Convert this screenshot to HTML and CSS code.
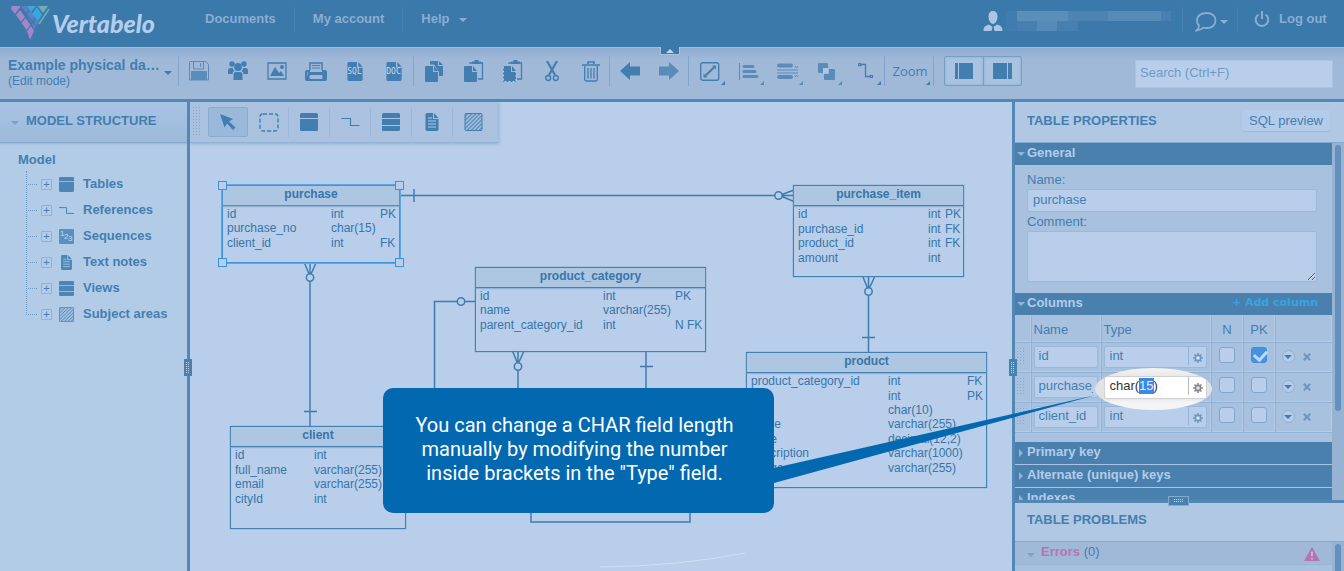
FILE: index.html
```html
<!DOCTYPE html>
<html lang="en">
<head>
<meta charset="utf-8">
<title>Vertabelo</title>
<link rel="stylesheet" href="styles.css">
</head>
<body>
<svg class="defs" aria-hidden="true">
  <defs>
    <pattern id="hatch" width="4" height="4" patternUnits="userSpaceOnUse"><path d="M-1 1L1-1M0 4L4 0M3 5L5 3" stroke="currentColor" stroke-width="1.2"/></pattern>
    <symbol id="i-table" viewBox="0 0 18 18"><path d="M1.500 0h15Q18 0 18 1.500V5H0V1.500Q0 0 1.500 0zM0 6h18v10.500q0 1.500-1.500 1.500h-15Q0 18 0 16.500z" fill="currentColor"/></symbol>
    <symbol id="i-view" viewBox="0 0 18 18"><path d="M1.500 0h15Q18 0 18 1.500V5H0V1.500Q0 0 1.500 0zM0 6h18v6H0zM0 13h18v3.500q0 1.500-1.500 1.500h-15Q0 18 0 16.500z" fill="currentColor"/></symbol>
    <symbol id="i-ref" viewBox="0 0 18 18"><path d="M0 5.500h9v7h9" fill="none" stroke="currentColor" stroke-width="1.200"/></symbol>
    <symbol id="i-note" viewBox="0 0 18 18"><path d="M3.500 0H10v6h5.500v10.500q0 1.500-1.500 1.500H4q-1.500 0-1.500-1.500V1.500Q2.500 0 4 0zM11 0l4.500 5H11z" fill="currentColor"/><path d="M5 5h4M5 8h8M5 11h8M5 14h8" stroke="#b0c9e7"/></symbol>
    <symbol id="i-area" viewBox="0 0 18 18"><rect x=".5" y=".5" width="17" height="17" rx="1" fill="url(#hatch)" stroke="currentColor"/></symbol>
    <symbol id="i-gear" viewBox="0 0 10 10"><path d="M5 0v10M0 5h10M1.500 1.500l7 7M8.500 1.500l-7 7" stroke="currentColor" stroke-width="1.600"/><circle cx="5" cy="5" r="2.600" fill="none" stroke="currentColor" stroke-width="1.600"/><circle cx="5" cy="5" r="1.800" fill="#dce8f5"/></symbol>
    <symbol id="i-file" viewBox="0 0 16 20"><path d="M1.500 0H10v6h6v12.500q0 1.500-1.500 1.500h-13Q0 20 0 18.500v-17Q0 0 1.500 0zM11.500 0L16 5h-4.500z" fill="currentColor"/></symbol>
  </defs>
</svg>
<div class="app">
  <header class="topbar">
    <a class="brand" href="#">
      <svg width="40" height="36" viewBox="0 0 40 36" aria-hidden="true">
        <path d="M2 0h9L5 8 1 3z" fill="#a485c5"/><path d="M6 9l4-5 5 7-4 5z" fill="#a485c5"/><path d="M11.500 17l4-5 5 7-4 5z" fill="#a485c5"/><path d="M17 25l4-5 3 5-4 9z" fill="#a485c5"/>
        <path d="M13 0h8l-5 7-5-6z" fill="#5b80c2"/><path d="M16 9l4-5 5 7-4 6z" fill="#5b80c2"/><path d="M22 18l4-5 3 3-5 8z" fill="#5b80c2"/>
        <path d="M17 0h9l-5 6z" fill="#3fa5e2"/><path d="M22 8l5-7 5 8-4 6z" fill="#3fa5e2"/>
        <path d="M28 0h10l-5 7z" fill="#6fafb4"/><path d="M39 3L29 18" stroke="#6fafb4" stroke-width="1.500"/><path d="M10 0L29 24" stroke="#3a79a9" stroke-width="1"/>
      </svg>
      <span>Vertabelo</span>
    </a>
    <nav class="nav">
      <a href="#">Documents</a><a href="#">My account</a><a href="#">Help <i class="caret"></i></a>
    </nav>
    <div class="user">
      <svg width="20" height="21" viewBox="0 0 20 21" aria-hidden="true"><path d="M10 0c3 0 4.500 2 4.500 5.500S12.500 13 10 13 5.500 9 5.500 5.500 7 0 10 0zM6 13.500l3.500 2.500-1 4H.5c0-4 1.500-5.500 5.500-6.500zM14 13.500l-3.500 2.500 1 4h8c0-4-1.500-5.500-5.500-6.500z" fill="#aac5e6"/></svg>
      <svg class="mosaic" width="166" height="30" viewBox="0 0 166 30" aria-hidden="true"><path d="M0 0h166v30H0z" fill="#3c79aa"/><path d="M11 1h51v10H11z" fill="#5a8ebb"/><path d="M62 1h40v10H62z" fill="#4c84b3"/><path d="M102 1h53v10h-53z" fill="#568bb8"/><path d="M155 1h10v10h-10z" fill="#4780b0"/><path d="M11 11h20v10H11zM51 11h21v10H51z" fill="#477fb0"/><path d="M31 11h20v10H31z" fill="#568ab8"/><path d="M0 1h11v20H0z" fill="#407cad"/></svg>
    </div>
    <button class="chat" aria-label="Messages"><svg width="22" height="20" viewBox="0 0 22 20" fill="none" stroke="currentColor" stroke-width="1.800" aria-hidden="true"><path d="M11.500 1C17 1 20.500 4 20.500 8.500S17 16 11.500 16c-1 0-2-.1-3-.4Q6 18 1.500 18.500 4 16.500 4 13.500 2 11.500 2 8.500C2 4 6 1 11.500 1z"/></svg><i class="caret"></i></button>
    <a class="logout" href="#"><svg width="16" height="17" viewBox="0 0 16 17" fill="none" stroke="currentColor" stroke-width="2" aria-hidden="true"><path d="M4.500 3.500a6.300 6.300 0 1 0 7 0M8 0v8"/></svg>Log out</a>
  </header>

  <div class="toolbar">
    <button class="collapse" aria-label="Hide header"></button>
    <button class="doc"><span class="doc-name"><b>Example physical da…</b><small>(Edit mode)</small></span><i class="caret"></i></button>
    <div class="group">
      <button class="off" aria-label="Save"><svg width="20" height="20" viewBox="0 0 20 20" fill="none" stroke="currentColor"><path d="M1 .5h16l2.500 3v15.500H.5V1z"/><path d="M4.500 1v7h10V1M11.500 2v4" /><path d="M2.500 10.500h15v8h-15z" fill="currentColor"/></svg></button>
      <button aria-label="Share"><svg width="20" height="20" viewBox="0 0 20 20" fill="currentColor"><circle cx="4" cy="3" r="2.700"/><circle cx="16" cy="3" r="2.700"/><path d="M0 13V9.500Q0 7 2.500 7h2.300q0 2 1.700 3-2 .7-2 3zM20 13V9.500Q20 7 17.500 7h-2.300q0 2-1.700 3 2 .7 2 3zM5.500 19v-5.500q0-2.500 2.500-2.500h4q2.500 0 2.500 2.500V19z"/><circle cx="10" cy="6" r="3.900"/></svg></button>
      <button aria-label="Export image"><svg width="20" height="18" viewBox="0 0 20 18"><path d="M1 1h18v16H1z" fill="none" stroke="currentColor" stroke-width="1.300"/><path d="M3 14l5-9 4 6 2-2 3 5z" fill="currentColor"/><circle cx="15" cy="5" r="2" fill="currentColor"/></svg></button>
      <button aria-label="Print"><svg width="22" height="19" viewBox="0 0 22 19"><path d="M5 8V1h12v7" fill="none" stroke="currentColor" stroke-width="1.500"/><path d="M7 3.500h8M7 6h8" stroke="currentColor"/><path d="M2 8h3v2h12V8h3q2 0 2 2v7q0 2-2 2H2q-2 0-2-2v-7q0-2 2-2z" fill="currentColor"/><path d="M5 13.500h12v3H5zM2 11h1M2 13h1" fill="#a0b9d9" stroke="#a0b9d9"/></svg></button>
      <button class="file" aria-label="SQL"><svg width="16" height="19"><use href="#i-file"/></svg><span>SQL</span></button>
      <button class="file" aria-label="DOC"><svg width="16" height="19"><use href="#i-file"/></svg><span>DOC</span></button>
    </div>
    <div class="group edit">
      <button aria-label="Copy"><svg width="20" height="21" viewBox="0 0 20 21" fill="currentColor"><path d="M6 0h7v5h5v9q0 1-1 1h-3v-4L9 3.500H5V1q0-1 1-1zM14 0l4 4h-4z"/><path d="M1 5h7v6h5v9q0 1-1 1H1q-1 0-1-1V6q0-1 1-1zM9 5l4 5H9z"/></svg></button>
      <button aria-label="Paste"><svg width="20" height="22" viewBox="0 0 20 22"><path d="M6 4V3h12.500v16H14" fill="none" stroke="currentColor" stroke-width="1.300"/><path d="M8 4V1.500h2.500V0h4v1.500H17V4zM1 6h7v6h5v9q0 1-1 1H1q-1 0-1-1V7q0-1 1-1zM9 6l4 5H9z" fill="currentColor"/></svg></button>
      <button aria-label="Paste special"><svg width="20" height="22" viewBox="0 0 20 22"><path d="M6 4V3h12.500v16H14" fill="none" stroke="currentColor" stroke-width="1.300"/><path d="M8 4V1.500h2.500V0h4v1.500H17V4zM1 6h7v6h5v9q0 1-1 1H1q-1 0-1-1V7q0-1 1-1zM9 6l4 5H9z" fill="currentColor"/><path d="M.5 6.500v15h12.500V11" fill="none" stroke="#b6ccea" stroke-dasharray="2 2"/></svg></button>
      <button aria-label="Cut"><svg width="14" height="21" viewBox="0 0 14 21" fill="none" stroke="currentColor"><path d="M2 0l8 14M12 0L4 14" stroke-width="2.200"/><circle cx="3.200" cy="17" r="2.400" stroke-width="1.500"/><circle cx="10.800" cy="17" r="2.400" stroke-width="1.500"/></svg></button>
      <button aria-label="Delete"><svg width="18" height="21" viewBox="0 0 18 21" fill="none" stroke="currentColor"><path d="M0 4h18M6 3V1h6v2" stroke-width="1.700"/><path d="M2.700 5v13.500q0 1.500 1.500 1.500h9.600q1.500 0 1.500-1.500V5M6 7v10.500M9 7v10.500M12 7v10.500" stroke-width="1.300"/></svg></button>
    </div>
    <div class="group">
      <button aria-label="Undo"><svg width="20" height="20" viewBox="0 0 20 20"><path d="M0 10L10 1v4.500h10v9H10V19z" fill="currentColor"/></svg></button>
      <button class="off" aria-label="Redo"><svg width="20" height="20" viewBox="0 0 20 20"><path d="M20 10L10 1v4.500H0v9h10V19z" fill="currentColor"/></svg></button>
    </div>
    <div class="group menus">
      <button aria-label="Resize"><svg width="20" height="19" viewBox="0 0 20 19"><rect x=".7" y=".7" width="18" height="17.500" rx="2" fill="none" stroke="currentColor" stroke-width="1.400"/><path d="M5.500 13.500L14 5.500" stroke="currentColor" stroke-width="2.200"/><path d="M3.500 15.500v-4l4 4zM16 3.500v4l-4-4z" fill="currentColor"/></svg></button>
      <button class="off" aria-label="Align"><svg width="20" height="17" viewBox="0 0 20 17"><path d="M.5 0v17" stroke="currentColor"/><path d="M5 3.500h9M5 8.500h11M5 13.500h13" stroke="currentColor" stroke-width="3" stroke-linecap="round"/></svg></button>
      <button class="off" aria-label="Distribute"><svg width="22" height="16" viewBox="0 0 22 16"><path d="M2 2.500h12M2 14h12" stroke="currentColor" stroke-width="4" stroke-linecap="round"/><path d="M0 7h21M0 10h21M18 3l1.500 2L21 3M18 14l1.500-2 1.500 2" stroke="currentColor" fill="none"/></svg></button>
      <button class="off" aria-label="Order"><svg width="17" height="17" viewBox="0 0 17 17"><path d="M1 0h8q1 0 1 1v4H6q-1 0-1 1v4H1q-1 0-1-1V1q0-1 1-1zM11 6h5q1 0 1 1v9q0 1-1 1H7q-1 0-1-1v-5h4q1 0 1-1z" fill="currentColor"/><path d="M5 5h5v5H5z" fill="#b4cbe8"/></svg></button>
      <button aria-label="Line style"><svg width="16" height="16" viewBox="0 0 16 16" fill="none" stroke="currentColor"><path d="M3 1.500h4.500V13.500H12" stroke-width="1.300"/><path d="M.7.700h2v2h-2zM12.500 12.500h2v2h-2z" stroke-width="1.200"/></svg></button>
    </div>
    <div class="group menus"><button class="zoom">Zoom</button></div>
    <div class="group toggles-wrap">
      <div class="toggles">
        <button aria-label="Left panel"><svg width="20" height="16" viewBox="0 0 20 16" fill="currentColor"><path d="M1 0h3v16H1zM5 0h14v16H5z"/></svg></button>
        <button aria-label="Right panel"><svg width="20" height="16" viewBox="0 0 20 16" fill="currentColor"><path d="M0 0h14v16H0zM15 0h4v16h-4z"/></svg></button>
      </div>
    </div>
    <input class="search" type="search" placeholder="Search (Ctrl+F)" aria-label="Search">
  </div>

  <div class="work">
    <aside class="left">
      <h2><i class="caret dim"></i>MODEL STRUCTURE</h2>
      <div class="tree">
        <b>Model</b>
        <ul>
          <li><button aria-label="Expand">+</button><svg width="15" height="15"><use href="#i-table"/></svg>Tables</li>
          <li><button aria-label="Expand">+</button><svg width="15" height="15"><use href="#i-ref"/></svg>References</li>
          <li><button aria-label="Expand">+</button><span class="seq"><i>1</i><i>2</i><i>3</i></span>Sequences</li>
          <li><button aria-label="Expand">+</button><svg width="15" height="15"><use href="#i-note"/></svg>Text notes</li>
          <li><button aria-label="Expand">+</button><svg width="15" height="15"><use href="#i-view"/></svg>Views</li>
          <li><button aria-label="Expand">+</button><svg width="15" height="15"><use href="#i-area"/></svg>Subject areas</li>
        </ul>
      </div>
    </aside>
    <div class="split"><span class="grip"></span></div>

    <main class="canvas">
      <svg class="links" width="822" height="469" viewBox="190 102 822 469" fill="none" stroke="#3f7cad" stroke-width="1.500" aria-hidden="true">
        <path d="M399 195.500H775M414 189v13M782.500 195.500H794M782 194.500l12-4.500M782 196.500l12 5"/><circle cx="778.500" cy="195.500" r="3.700"/>
        <path d="M310 281.500V427M304 411.500h13M310 263v11M304.500 263l4.500 11M316 263l-5 11"/><circle cx="310" cy="277.500" r="3.700"/>
        <path d="M476 301.500H465M457 301.500H434.500V400"/><circle cx="461" cy="301.500" r="3.700"/>
        <path d="M518 370V400M518 351v11M512.500 351l4.500 11M524 351l-5 11M646 351v49M640 366.500h13"/><circle cx="518" cy="366.500" r="3.700"/>
        <path d="M868.500 295.500V352M862 337.500h13M868.500 277v11M863 277l4.500 11M874.500 277l-5 11"/><circle cx="868.500" cy="291.500" r="3.700"/>
        <path d="M531 500v22h159v-22"/>
        <path d="M600 567q80-1 145-14" stroke="#cfdff4" stroke-width="1"/>
      </svg>
      <section class="entity purchase"><h3>purchase</h3>
        <table><colgroup><col class="w104"><col class="w49"><col></colgroup>
          <tr><td>id<td>int<td>PK<tr><td>purchase_no<td>char(15)<td><tr><td>client_id<td>int<td>FK
        </table><i></i><i></i><i></i><i></i></section>
      <section class="entity item"><h3>purchase_item</h3>
        <table><colgroup><col class="w130"><col class="w17"><col></colgroup>
          <tr><td>id<td>int<td>PK<tr><td>purchase_id<td>int<td>FK<tr><td>product_id<td>int<td>FK<tr><td>amount<td>int<td>
        </table></section>
      <section class="entity category"><h3>product_category</h3>
        <table><colgroup><col class="w123"><col class="w72"><col></colgroup>
          <tr><td>id<td>int<td>PK<tr><td>name<td>varchar(255)<td><tr><td>parent_category_id<td>int<td>N FK
        </table></section>
      <section class="entity product"><h3>product</h3>
        <table><colgroup><col class="w137"><col class="w79"><col></colgroup>
          <tr><td>product_category_id<td>int<td>FK<tr><td><td>int<td>PK<tr><td><td>char(10)<td><tr><td>name<td>varchar(255)<td><tr><td>price<td>decimal(12,2)<td><tr><td>description<td>varchar(1000)<td><tr><td>image<td>varchar(255)<td>
        </table></section>
      <section class="entity client"><h3>client</h3>
        <table><colgroup><col class="w79"><col><col class="w17"></colgroup>
          <tr><td>id<td>int<td><tr><td>full_name<td>varchar(255)<td><tr><td>email<td>varchar(255)<td><tr><td>cityId<td>int<td>
        </table></section>
      <div class="palette">
        <span class="dots"></span>
        <button class="on" aria-label="Select"><svg width="18" height="18" viewBox="0 0 18 18"><path d="M1 1l13 5-4 2.500 6.500 6-2.500 2.500-6-6.500-2.500 4z" fill="currentColor"/></svg></button>
        <button aria-label="Select area"><svg width="20" height="19" viewBox="0 0 20 19"><rect x="1" y="1" width="18" height="17" rx="3" fill="none" stroke="currentColor" stroke-width="1.400" stroke-dasharray="4 2"/></svg></button>
        <button aria-label="Add table"><svg width="18" height="18"><use href="#i-table"/></svg></button>
        <button aria-label="Add reference"><svg width="19" height="18"><use href="#i-ref"/></svg></button>
        <button aria-label="Add view"><svg width="18" height="18"><use href="#i-view"/></svg></button>
        <button aria-label="Add note"><svg width="18" height="18"><use href="#i-note"/></svg></button>
        <button aria-label="Add area"><svg width="19" height="18"><use href="#i-area"/></svg></button>
      </div>
    </main>
    <div class="split"><span class="grip"></span></div>

    <aside class="right">
      <div class="props">
        <div class="panel-head"><h2>TABLE PROPERTIES</h2><button class="preview">SQL preview</button></div>
        <div class="scroll">
          <div class="sections">
            <h3><i class="caret"></i>General</h3>
            <div class="form">
              <label for="name">Name:</label><input id="name" value="purchase">
              <label for="comment">Comment:</label><textarea id="comment"></textarea>
            </div>
            <h3><i class="caret"></i>Columns<button class="add">+ Add column</button></h3>
            <table class="cols">
              <colgroup><col class="c-drag"><col class="c-name"><col><col class="c-box"><col class="c-box"><col class="c-act"></colgroup>
              <thead><tr><th></th><th>Name</th><th>Type</th><th class="mid">N</th><th class="mid">PK</th><th></th></tr></thead>
              <tbody>
                <tr><td><span class="dots"></span></td><td><input aria-label="Name" value="id"></td><td><span class="type"><input aria-label="Type" value="int"><button aria-label="Type options"><svg width="10" height="10"><use href="#i-gear"/></svg></button></span></td><td class="mid"><input type="checkbox" aria-label="Nullable"></td><td class="mid"><input type="checkbox" aria-label="Primary key" checked></td><td><button class="more" aria-label="More"></button><button class="del" aria-label="Remove"><svg width="8" height="8" viewBox="0 0 8 8"><path d="M.8.800l6.400 6.400M7.200.800L.8 7.200" stroke="currentColor" stroke-width="2"/></svg></button></td></tr>
                <tr><td><span class="dots"></span></td><td><input aria-label="Name" value="purchase_no"></td><td class="lit"><div class="spot"><span class="type"><input id="type" aria-label="Type" value="char(15)"><button aria-label="Type options"><svg width="10" height="10"><use href="#i-gear"/></svg></button></span></div></td><td class="mid"><input type="checkbox" aria-label="Nullable"></td><td class="mid"><input type="checkbox" aria-label="Primary key"></td><td><button class="more" aria-label="More"></button><button class="del" aria-label="Remove"><svg width="8" height="8" viewBox="0 0 8 8"><path d="M.8.800l6.400 6.400M7.200.800L.8 7.200" stroke="currentColor" stroke-width="2"/></svg></button></td></tr>
                <tr><td><span class="dots"></span></td><td><input aria-label="Name" value="client_id"></td><td><span class="type"><input aria-label="Type" value="int"><button aria-label="Type options"><svg width="10" height="10"><use href="#i-gear"/></svg></button></span></td><td class="mid"><input type="checkbox" aria-label="Nullable"></td><td class="mid"><input type="checkbox" aria-label="Primary key"></td><td><button class="more" aria-label="More"></button><button class="del" aria-label="Remove"><svg width="8" height="8" viewBox="0 0 8 8"><path d="M.8.800l6.400 6.400M7.200.800L.8 7.200" stroke="currentColor" stroke-width="2"/></svg></button></td></tr>
              </tbody>
            </table>
            <h3 class="shut"><i class="caret side"></i>Primary key</h3>
            <h3 class="shut"><i class="caret side"></i>Alternate (unique) keys</h3>
            <h3 class="shut"><i class="caret side"></i>Indexes</h3>
          </div>
          <div class="bar"><span class="thumb"></span></div>
        </div>
      </div>
      <div class="problems">
        <span class="grip wide"></span>
        <div class="panel-head"><h2>TABLE PROBLEMS</h2></div>
        <div class="scroll">
          <div class="sections"><p class="errors"><i class="caret dim"></i><b>Errors</b> (0)<svg width="16" height="14" viewBox="0 0 16 14" aria-hidden="true"><path d="M8 0l8 14H0z" fill="#b674b3"/><path d="M8 4.500v5M8 11v1.500" stroke="#d5d3ee" stroke-width="1.300"/></svg></p></div>
          <div class="bar"><span class="thumb"></span></div>
        </div>
      </div>
    </aside>
  </div>
</div>
<svg class="pointer" width="322" height="90" viewBox="0 0 322 90" aria-hidden="true"><path d="M0 73L322 0 0 88z" fill="#0268b0"/></svg>
<div class="callout" role="tooltip">You can change a CHAR field length manually by modifying the number inside brackets in the "Type" field.</div>
<script src="script.js"></script>
</body>
</html>
```

FILE: styles.css
```css
* { box-sizing: border-box; }
body {
  margin: 0;
  overflow: hidden;
  font: 13px/16px "Liberation Sans", Arial, sans-serif;
  color: #437eb0;
  background: #b8ceea;
}
h2, h3, p, ul { margin: 0; padding: 0; }
button { font: inherit; color: inherit; background: none; border: 0; padding: 0; margin: 0; }
a { color: inherit; text-decoration: none; }
input, textarea { font: inherit; color: inherit; outline: 0; }
svg { display: block; flex: none; }
.defs { position: absolute; width: 0; height: 0; }
.app { display: flex; flex-direction: column; height: 100vh; }
.caret { display: inline-block; width: 0; height: 0; flex: none; border: 4px solid transparent; border-top-color: currentColor; border-bottom: 0; }
.caret.dim { color: #78a2c9; }
.caret.side { border: 4px solid transparent; border-left-color: currentColor; border-right: 0; }

/* header */
.topbar { display: flex; flex: none; height: 47px; background: #3a79a9; color: #8badd4; font-weight: bold; }
.brand { display: flex; width: 187px; padding: 6px 0 0 10px; color: #b5cdec; }
.brand span { margin-left: 2px; font: italic 900 25px/34px Lato, sans-serif; }
.nav { display: flex; flex: 1; padding-top: 7px; }
.nav a { height: 25px; padding: 4px 18px 0; border-right: 1px solid #4682b1; }
.nav a:last-child { border: 0; }
.nav .caret { margin: 0 0 1px 6px; }
.user { display: flex; gap: 3px; padding: 11px 10px 0 0; }
.mosaic { margin-top: -1px; }
.chat, .logout { display: flex; align-items: center; height: 25px; margin-top: 7px; padding-left: 12px; border-left: 1px solid #4682b1; }
.chat { width: 55px; padding-top: 4px; gap: 3px; }
.logout { width: 107px; padding-left: 16px; gap: 9px; align-items: flex-start; padding-top: 4px; }

/* toolbar */
.toolbar {
  position: relative;
  display: flex;
  flex: none;
  align-items: flex-start;
  height: 55px;
  border-bottom: 3px solid #5288b3;
  border-top: 1px solid #a3bfde;
  background: linear-gradient(#8fadd0, #a0b9d9 12px);
}
.collapse { position: absolute; left: 50%; top: -1px; width: 20px; height: 8px; margin-left: -12px; background: #3a79a9; border: solid #a9c4e3; border-width: 0 1px 1px; }
.collapse::after { content: ""; display: block; width: 0; margin: 0 auto; border: 4px solid transparent; border-bottom-color: #c0d5ef; border-top: 0; }
.doc { display: flex; width: 178px; padding: 9px 0 0 8px; gap: 4px; text-align: left; }
.doc-name { display: flex; flex-direction: column; width: 152px; white-space: nowrap; }
.doc-name b { font-size: 14px; line-height: 17px; }
.doc-name small { font-size: 12px; line-height: 14px; }
.doc .caret { margin-top: 14px; }
.group { display: flex; border-left: 1px solid #7fa5cb; height: 30px; margin-top: 8px; }
.group button { display: flex; position: relative; width: 39px; align-items: center; justify-content: center; height: 30px; }
.group.edit button { padding-left: 3px; }
.group .off { opacity: .75; }
.file span { position: absolute; left: 0; width: 39px; top: 11px; text-align: center; font: 8px/10px "DejaVu Sans Mono", monospace; color: #c5d9f1; }
.menus button::after { content: ""; position: absolute; right: 3px; bottom: 1px; border: 2px solid; border-color: transparent currentColor currentColor transparent; }
.group.menus button { padding-left: 2px; }
.group.menus .zoom { width: 48px; font: 13px/30px "Open Sans", sans-serif; }
.toggles-wrap { padding-left: 10px; }
.toggles { display: flex; border: 1px solid #769fc7; border-radius: 2px; background: #a9c3e1; }
.toggles button { width: 38px; height: 28px; box-shadow: inset 0 0 3px #8aadd1; }
.toggles button + button { border-left: 1px solid #769fc7; }
.search { width: 198px; height: 28px; margin: 12px 11px 0 auto; padding: 0 4px 3px; border: 1px solid #a9c4e3; background: #b8ceea; }
.search::placeholder { color: #7099c4; opacity: 1; }

/* work area */
.work { display: flex; flex: 1; min-height: 0; }
.split { position: relative; flex: none; width: 3px; background: #5288b3; z-index: 2; }
.grip { position: absolute; left: -3px; top: 257px; width: 8px; height: 17px; padding: 3px 2px; background: #4a80ae; }
.grip::after { content: ""; display: block; height: 100%; background: radial-gradient(circle at 0 0, #bdd3ee 1px, transparent 1px) 0 0 / 2px 2px; }
.left { flex: none; width: 187px; background: #b2cce8; }
.left h2 { height: 41px; padding: 10px 11px; display: flex; gap: 7px; font-size: 13px; line-height: 17px; background: linear-gradient(#a9c4e3, #9bb9da); border-bottom: 1px solid #84a9cf; box-shadow: 0 1px 2px #96b6d9; }
.left h2 .caret { margin-top: 9px; }
.tree { padding: 8px 0 0 18px; font-weight: bold; }
.tree b { display: block; line-height: 17px; }
.tree ul { position: relative; margin: 3px 0 0 8px; list-style: none; }
.tree ul::before { content: ""; position: absolute; left: 0; top: 0; bottom: 12px; border-left: 1px dotted #6f9ac4; }
.tree li { display: flex; align-items: center; gap: 9px; height: 26px; }
.tree li::before { content: ""; width: 11px; margin-right: -5px; border-top: 1px dotted #6f9ac4; }
.tree li button { width: 11px; height: 11px; margin-right: -2px; border: 1px solid #8fb1d6; border-radius: 1px; font: 11px/9px "Liberation Sans", sans-serif; }
.tree svg { opacity: .9; }
.seq { display: flex; width: 15px; height: 15px; padding: 1px; background: #5b8fbf; color: #c5d9f1; border-radius: 1px; }
.seq i { width: 4px; font: 8px/8px "Liberation Sans", sans-serif; }
.seq i:nth-child(2) { padding-top: 3px; }
.seq i:nth-child(3) { padding-top: 5px; }

/* diagram */
.canvas { position: relative; flex: 1; min-width: 0; overflow: hidden; background: #b8ceea; }
.palette { position: absolute; left: 0; top: 0; display: flex; height: 41px; padding: 5px 4px 5px 3px; background: #aac2e0; border-bottom: 1px solid #92b1d5; box-shadow: 1px 1px 3px #8fb0d6; }
.palette button { display: flex; width: 41px; height: 30px; align-items: center; justify-content: center; border-right: 1px solid #9ab8da; }
.palette button:last-child { border: 0; }
.palette .on { width: 40px; border: 1px solid #8aacd2; border-radius: 2px; background: #9ab8d9; }
.palette .on + button { padding-left: 1px; }
.dots { display: block; width: 7px; height: 18px; background: radial-gradient(circle at 0 0, #84a9d0 1px, transparent 1px) 0 0 / 3px 3px; }
.palette .dots { height: 30px; margin-right: 8px; }
.links { position: absolute; left: 0; top: 0; }
.entity { position: absolute; border: 1px solid #4480b0; box-shadow: 0 0 1px #4480b0; color: #3776a8; font-size: 12px; line-height: 14px; }
.entity h3 { height: 20px; font-size: 12px; line-height: 17px; text-align: center; background: #adc6e1; border-bottom: 1px solid #4480b0; box-shadow: 0 1px 1px #8fb3d6; }
.entity table { width: 100%; table-layout: fixed; border-collapse: collapse; margin-top: 1px; }
.entity td { padding: 0 0 0 4px; white-space: nowrap; }
.purchase { left: 32px; top: 83px; width: 178px; height: 78px; border-color: #3c93e0; box-shadow: 0 0 0 1px #5fa6e5; }
.purchase h3 { border-color: #3c93e0; }
.purchase table, .category table { height: 43px; }
.item { left: 603px; top: 83px; width: 171px; height: 92px; }
.item table, .client table { height: 58px; }
.category { left: 285px; top: 165px; width: 231px; height: 85px; }
.product { left: 556px; top: 250px; width: 241px; height: 136px; }
.product table { height: 101px; }
.client { left: 40px; top: 324px; width: 176px; height: 103px; }
.w17 { width: 17px; } .w49 { width: 49px; } .w72 { width: 72px; } .w79 { width: 79px; }
.w104 { width: 104px; } .w123 { width: 123px; } .w130 { width: 130px; } .w137 { width: 137px; }
.entity > i { position: absolute; width: 9px; height: 9px; border: 1px solid #3c93e0; background: #b8ceea; left: -5px; top: -5px; }
.entity > i:nth-of-type(2n) { left: auto; right: -5px; }
.entity > i:nth-of-type(n+3) { top: auto; bottom: -5px; }

/* properties */
.right { display: flex; flex-direction: column; flex: none; width: 329px; background: #a8c1df; }
.props { display: flex; flex-direction: column; flex: 1; min-height: 0; }
.panel-head { display: flex; flex: none; justify-content: space-between; height: 41px; padding: 10px 14px 0 12px; background: #b0c8e4; border-bottom: 1px solid #84a9cf; }
.panel-head h2 { font-size: 13px; line-height: 17px; }
.preview { height: 21px; margin-top: -2px; padding: 0 7px; border-radius: 2px; background: #b4cce9; box-shadow: 0 1px 1px #9ab8da; }
.scroll { display: flex; flex: 1; min-height: 0; overflow: hidden; }
.sections { flex: 1; min-width: 0; }
.bar { width: 12px; padding: 2px 3px; background: #96b3d3; }
.thumb { display: block; width: 6px; height: 266px; border-radius: 3px; background: #648fba; }
.sections h3 { display: flex; align-items: center; height: 22px; padding: 0 14px 2px 2px; gap: 2px; font-size: 13px; background: #4a80ae; color: #b3cceb; }
.sections h3 .caret { color: #91b4d9; margin-top: 2px; }
.sections h3 .caret.side { margin: 2px 2px 0; }
.sections .shut { margin-bottom: 1px; box-shadow: 0 1px #a8c4e4; }
.add { margin-left: auto; font: bold 11px/16px "DejaVu Sans", sans-serif; color: #38a4e4; }
.form { display: flex; flex-direction: column; padding: 6px 15px 11px 12px; }
.form label { line-height: 17px; }
.form input, .form textarea { width: 100%; margin: 0; border: 1px solid #9bb9da; border-radius: 2px; background: #b8ceea; }
.form input { height: 23px; padding: 0 5px 2px; margin: 1px 0; }
.form textarea { height: 51px; margin-top: 1px; resize: both; }
.cols { width: 100%; table-layout: fixed; border-collapse: collapse; margin: 1px 0 9px; }
.cols th { height: 26px; padding: 2px 0 0 2px; text-align: left; font-weight: normal; vertical-align: middle; }
.cols td { height: 30px; padding: 3px 2px 4px; vertical-align: top; }
.cols th, .cols td { border: solid #93b1d5; border-width: 0 1px 1px 0; box-shadow: inset -1px -1px #b5cce8; }
.cols th:last-child, .cols td:last-child { border-right: 0; }
.cols .mid { text-align: center; padding-left: 0; padding-right: 0; }
.c-drag { width: 16px; } .c-name { width: 70px; } .c-box { width: 32px; } .c-act { width: 57px; }
.cols td > input:not([type]) { width: 64px; height: 22px; padding: 0 4px 2px; border: 1px solid #9ab8da; border-radius: 2px; background: #b8ceea; display: block; }
.type { display: flex; width: 103px; height: 22px; border: 1px solid #9ab8da; border-radius: 2px; background: #b8ceea; }
.type input { flex: 1; min-width: 0; border: 0; padding: 0 5px 2px; background: none; }
.type button { width: 18px; height: 18px; padding: 4px 4px 0; border-left: 1px solid #92b1d5; color: #6b97c0; }
.cols .dots { margin-top: 2px; }
.cols input[type=checkbox] { appearance: none; width: 16px; height: 16px; margin: 1px 0 0; border: 1px solid #82a5cf; border-radius: 3px; background: #b8ceea; display: inline-block; }
.cols input[type=checkbox]:checked { border-color: #3c8fdf; background: #4393e0; }
.cols input[type=checkbox]:checked::after { content: ""; display: block; width: 6px; height: 10px; margin: 0 0 0 4px; border: solid #c3d9f3; border-width: 0 3px 3px 0; transform: rotate(42deg); }
.more { width: 13px; height: 13px; margin: 4px 0 0 4px; border: 1px solid #92b1d5; border-radius: 50%; background: #b4cce8; vertical-align: top; }
.more::after { content: ""; display: block; width: 0; margin: 1px auto 0; border: 4px solid transparent; border-top-color: #3f7cae; border-bottom: 0; }
.del { margin: 7px 0 0 8px; color: #6b97c0; vertical-align: top; }
.cols .lit { position: relative; }
.spot { position: absolute; left: -7px; top: -5px; z-index: 3; width: 117px; height: 42px; padding: 8px 0 0 9px; overflow: hidden; border-radius: 50%; background: linear-gradient(#f4f4f4, #e3e3e3 12px 30px, #f4f4f4 34px); color: #333; }
.spot .type { border-color: #d0d0d0; background: #fff; height: 23px; }
.spot .type button { color: #888; border-color: #bbb; }
#type::selection { background: #3c87e8; color: #e5efff; }

/* problems */
.problems { position: relative; display: flex; flex-direction: column; flex: none; height: 71px; border-top: 3px solid #5288b3; }
.problems .panel-head { height: 39px; padding-top: 8px; }
.grip.wide { left: 154px; top: -6px; width: 19px; height: 8px; padding: 2px 5px; outline: 1px solid #84a9cf; }
.errors { display: flex; align-items: center; height: 23px; padding: 0 12px 2px; background: #a0b9d9; border-bottom: 1px solid #96b5d8; white-space: pre; }
.errors .caret { margin: 6px 6px 0 0; }
.errors b { color: #b674b3; }
.errors svg { margin: 4px 0 0 auto; }

/* tip */
.callout { position: absolute; left: 383px; top: 388px; z-index: 5; width: 391px; padding: 25px 32px 28px 24px; border-radius: 10px; background: #0268b0; color: #fff; font: 20px/24px Roboto, sans-serif; text-align: center; }
.pointer { position: absolute; left: 774px; top: 395px; z-index: 4; }
```

FILE: script.js
```js
const field = document.getElementById("type");
field.focus({ preventScroll: true });
field.setSelectionRange(5, 7);
```
